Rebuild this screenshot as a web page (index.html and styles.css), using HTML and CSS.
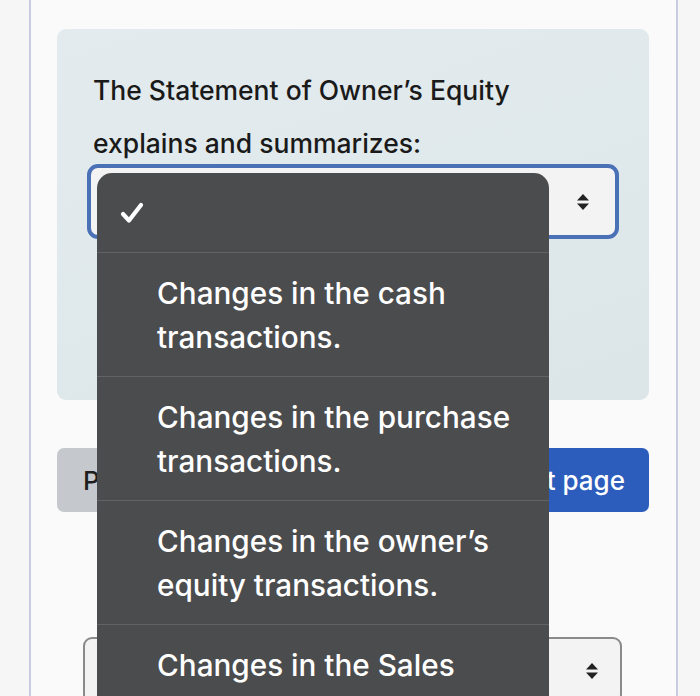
FILE: index.html
```html
<!DOCTYPE html>
<html lang="en">
<head>
    <meta charset="UTF-8">
    <meta name="viewport" content="width=device-width, initial-scale=1.0">
    <title>Quiz</title>
    <link rel="stylesheet" href="styles.css">
</head>
<body>
    <div class="card">
        <div class="question">
            <p class="question-text">The Statement of Owner’s Equity<br>explains and summarizes:</p>
            <div class="select select-focus">
                <span class="select-value"></span>
                <svg class="arrows" width="14" height="18" viewBox="0 0 14 18">
                    <path d="M7 1 L13 7.5 L1 7.5 Z M7 17 L13 10.5 L1 10.5 Z" fill="#222"/>
                </svg>
            </div>
        </div>

        <div class="nav">
            <button type="button" class="btn btn-prev">Previous page</button>
            <button type="button" class="btn btn-next">Next page</button>
        </div>

        <div class="question question-plain">
            <div class="select">
                <span class="select-value"></span>
                <svg class="arrows" width="14" height="18" viewBox="0 0 14 18">
                    <path d="M7 1 L13 7.5 L1 7.5 Z M7 17 L13 10.5 L1 10.5 Z" fill="#222"/>
                </svg>
            </div>
        </div>

        <ul class="menu">
            <li class="menu-item menu-check">
                <svg width="24" height="22" viewBox="0 0 24 22">
                    <path d="M3 12 L9 18.5 L21 3" fill="none" stroke="#fff" stroke-width="4.2" stroke-linecap="round" stroke-linejoin="round"/>
                </svg>
            </li>
            <li class="menu-item">Changes in the cash<br>transactions.</li>
            <li class="menu-item">Changes in the purchase<br>transactions.</li>
            <li class="menu-item">Changes in the owner’s<br>equity transactions.</li>
            <li class="menu-item">Changes in the Sales<br>transactions.</li>
        </ul>
    </div>
</body>
</html>
```

FILE: styles.css
```css
body {
    margin: 0;
    background-color: #f6f6f7;
    font-family: 'Inter', 'Roboto', sans-serif;
    overflow: hidden;
}

.card {
    position: relative;
    margin: -10px 0 0 29px;
    width: 649px;
    height: 760px;
    padding: 39px 27px 0 26px;
    box-sizing: border-box;
    background-color: #fafafb;
    border-left: 2px solid #c9cbe0;
    border-right: 2px solid #c9cbe0;
}

.question {
    background: linear-gradient(160deg, #e3ebee, #dce6e9);
    border-radius: 9px;
    padding: 35px 30px 0 30px;
    height: 371px;
    box-sizing: border-box;
}

.question-text {
    margin: 0 0 0 6px;
    font-size: 26.5px;
    font-weight: 500;
    line-height: 53px;
    color: #1a1a1a;
}

.select {
    display: flex;
    align-items: center;
    justify-content: flex-end;
    height: 67px;
    padding-right: 21px;
    background-color: #f3f3f3;
    border: 2px solid #8a8a8a;
    border-radius: 9px;
}

.select-focus {
    height: 67px;
    margin-top: -6px;
    border: 4px solid #4a70b6;
    border-radius: 11px;
    padding-right: 25px;
}

.nav {
    display: flex;
    justify-content: space-between;
    margin-top: 48px;
}

.btn {
    height: 64px;
    border: none;
    border-radius: 7px;
    font-family: 'Inter', 'Roboto', sans-serif;
    font-size: 26px;
    font-weight: 500;
}

.btn-prev {
    background-color: #c5c8cd;
    color: #1e1e1e;
    padding: 0 24px 0 26px;
}

.btn-next {
    background-color: #2c5dbd;
    color: #ffffff;
    padding: 0 24px 0 24px;
}

.question-plain {
    background: none;
    padding: 125px 0 0 26px;
}

.question-plain .select {
    width: 539px;
    box-sizing: border-box;
}

.menu {
    position: absolute;
    top: 183px;
    left: 66px;
    width: 452px;
    height: 600px;
    margin: 0;
    padding: 0;
    list-style: none;
    background-color: #4b4c4e;
    border-radius: 15px;
}

.menu-item {
    padding: 18px 10px 17px 60px;
    font-size: 29.7px;
    font-weight: 500;
    line-height: 44px;
    color: #ffffff;
    border-top: 1px solid #626365;
}

.menu-check {
    display: flex;
    align-items: center;
    height: 79px;
    padding: 0 0 0 23px;
    box-sizing: border-box;
    border-top: none;
}
```
